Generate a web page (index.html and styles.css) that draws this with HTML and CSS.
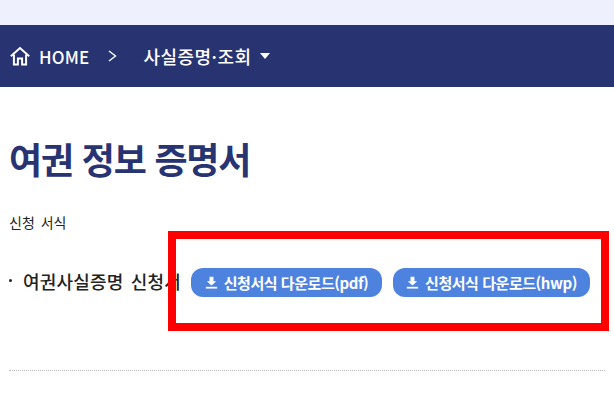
FILE: index.html
```html
<!DOCTYPE html>
<html lang="ko">
<head>
<meta charset="utf-8">
<title>여권 정보 증명서</title>
<link rel="stylesheet" href="styles.css">
</head>
<body>
<div class="topbar"></div>
<nav class="nav">
  <svg class="home" viewBox="0 0 20 20" width="20" height="20" fill="none" stroke="#fff" stroke-width="2" stroke-linejoin="miter"><path d="M.8 10.2 10 2l9.2 8.2"/><path d="M3.9 8.4V18.4h4V12.6h4.2V18.4h4V8.4"/></svg>
  <span class="home-label">HOME</span>
  <svg class="chev" viewBox="0 0 9 12" width="9" height="12" fill="none" stroke="#fff" stroke-width="1.4"><path d="M1 1l6.5 5L1 11"/></svg>
  <span class="section">사실증명·조회</span>
  <span class="caret"></span>
</nav>
<main class="content">
  <h1 class="title">여권 정보 증명서</h1>
  <p class="sub">신청 서식</p>
  <div class="row">
    <span class="bullet"></span>
    <span class="form-name">여권사실증명 신청서</span>
    <a class="btn">
      <svg class="dl" viewBox="0 0 12 12" width="13" height="13" fill="#fff"><path d="M4.2 .6h3.6v4.2H10.4L6 8.8 1.6 4.8h2.6z"/><rect x=".8" y="10" width="10.4" height="1.6"/></svg>
      신청서식 다운로드(pdf)
    </a>
    <a class="btn">
      <svg class="dl" viewBox="0 0 12 12" width="13" height="13" fill="#fff"><path d="M4.2 .6h3.6v4.2H10.4L6 8.8 1.6 4.8h2.6z"/><rect x=".8" y="10" width="10.4" height="1.6"/></svg>
      신청서식 다운로드(hwp)
    </a>
  </div>
  <hr class="rule">
</main>
<div class="highlight"></div>
</body>
</html>
```
FILE: styles.css
```css
* { box-sizing: border-box; }
html, body { margin: 0; padding: 0; }
body {
  position: relative;
  width: 614px;
  height: 403px;
  overflow: hidden;
  background: #fff;
  font-family: "Noto Sans CJK KR", "Noto Sans", sans-serif;
  color: #222;
}
.topbar { height: 25px; background: #eef0fd; }
.nav {
  height: 62px;
  background: #283371;
  display: flex;
  align-items: center;
  padding-left: 10px;
  color: #fff;
  font-size: 17px;
  font-weight: 500;
}
.home { flex: none; }
.home-label { margin-left: 9px; letter-spacing: 0.2px; }
.chev { margin-left: 18px; }
.section { margin-left: 27px; font-size: 18px; letter-spacing: 0.45px; }
.caret {
  margin-left: 9px;
  border-left: 5px solid transparent;
  border-right: 5px solid transparent;
  border-top: 6px solid #fff;
}
.content { padding: 0 0 0 9px; }
.title {
  margin: 45px 0 0;
  font-size: 36px;
  line-height: 52px;
  font-weight: 700;
  letter-spacing: -1.2px;
  color: #283371;
}
.sub {
  margin: 29px 0 0;
  font-size: 14px;
  line-height: 19px;
  word-spacing: 2px;
  color: #222;
}
.row {
  display: flex;
  align-items: center;
  height: 29px;
  margin-top: 36px;
}
.bullet { width: 3px; height: 3px; border-radius: 50%; background: #222; margin-right: 11px; margin-top: -5px; }
.form-name { font-size: 18px; font-weight: 500; letter-spacing: 0.2px; word-spacing: 2px; width: 168px; white-space: nowrap; margin-top: -4px; }
.btn {
  display: flex;
  align-items: center;
  justify-content: center;
  gap: 6px;
  height: 29px;
  padding-bottom: 1px;
  border-radius: 12px;
  background: #4d82de;
  color: #fff;
  font-size: 15px;
  font-weight: 700;
  letter-spacing: -0.45px;
  white-space: nowrap;
}
.btn:nth-of-type(1) { width: 191px; }
.btn + .btn { width: 197px; margin-left: 11px; }
.dl { flex: none; }
.rule {
  margin: 73px 0 0;
  border: 0;
  border-top: 1px dotted #bbb;
  width: 596px;
}
.highlight {
  position: absolute;
  left: 168px;
  top: 231px;
  width: 441px;
  height: 100px;
  border: 8px solid #f00;
}
```
